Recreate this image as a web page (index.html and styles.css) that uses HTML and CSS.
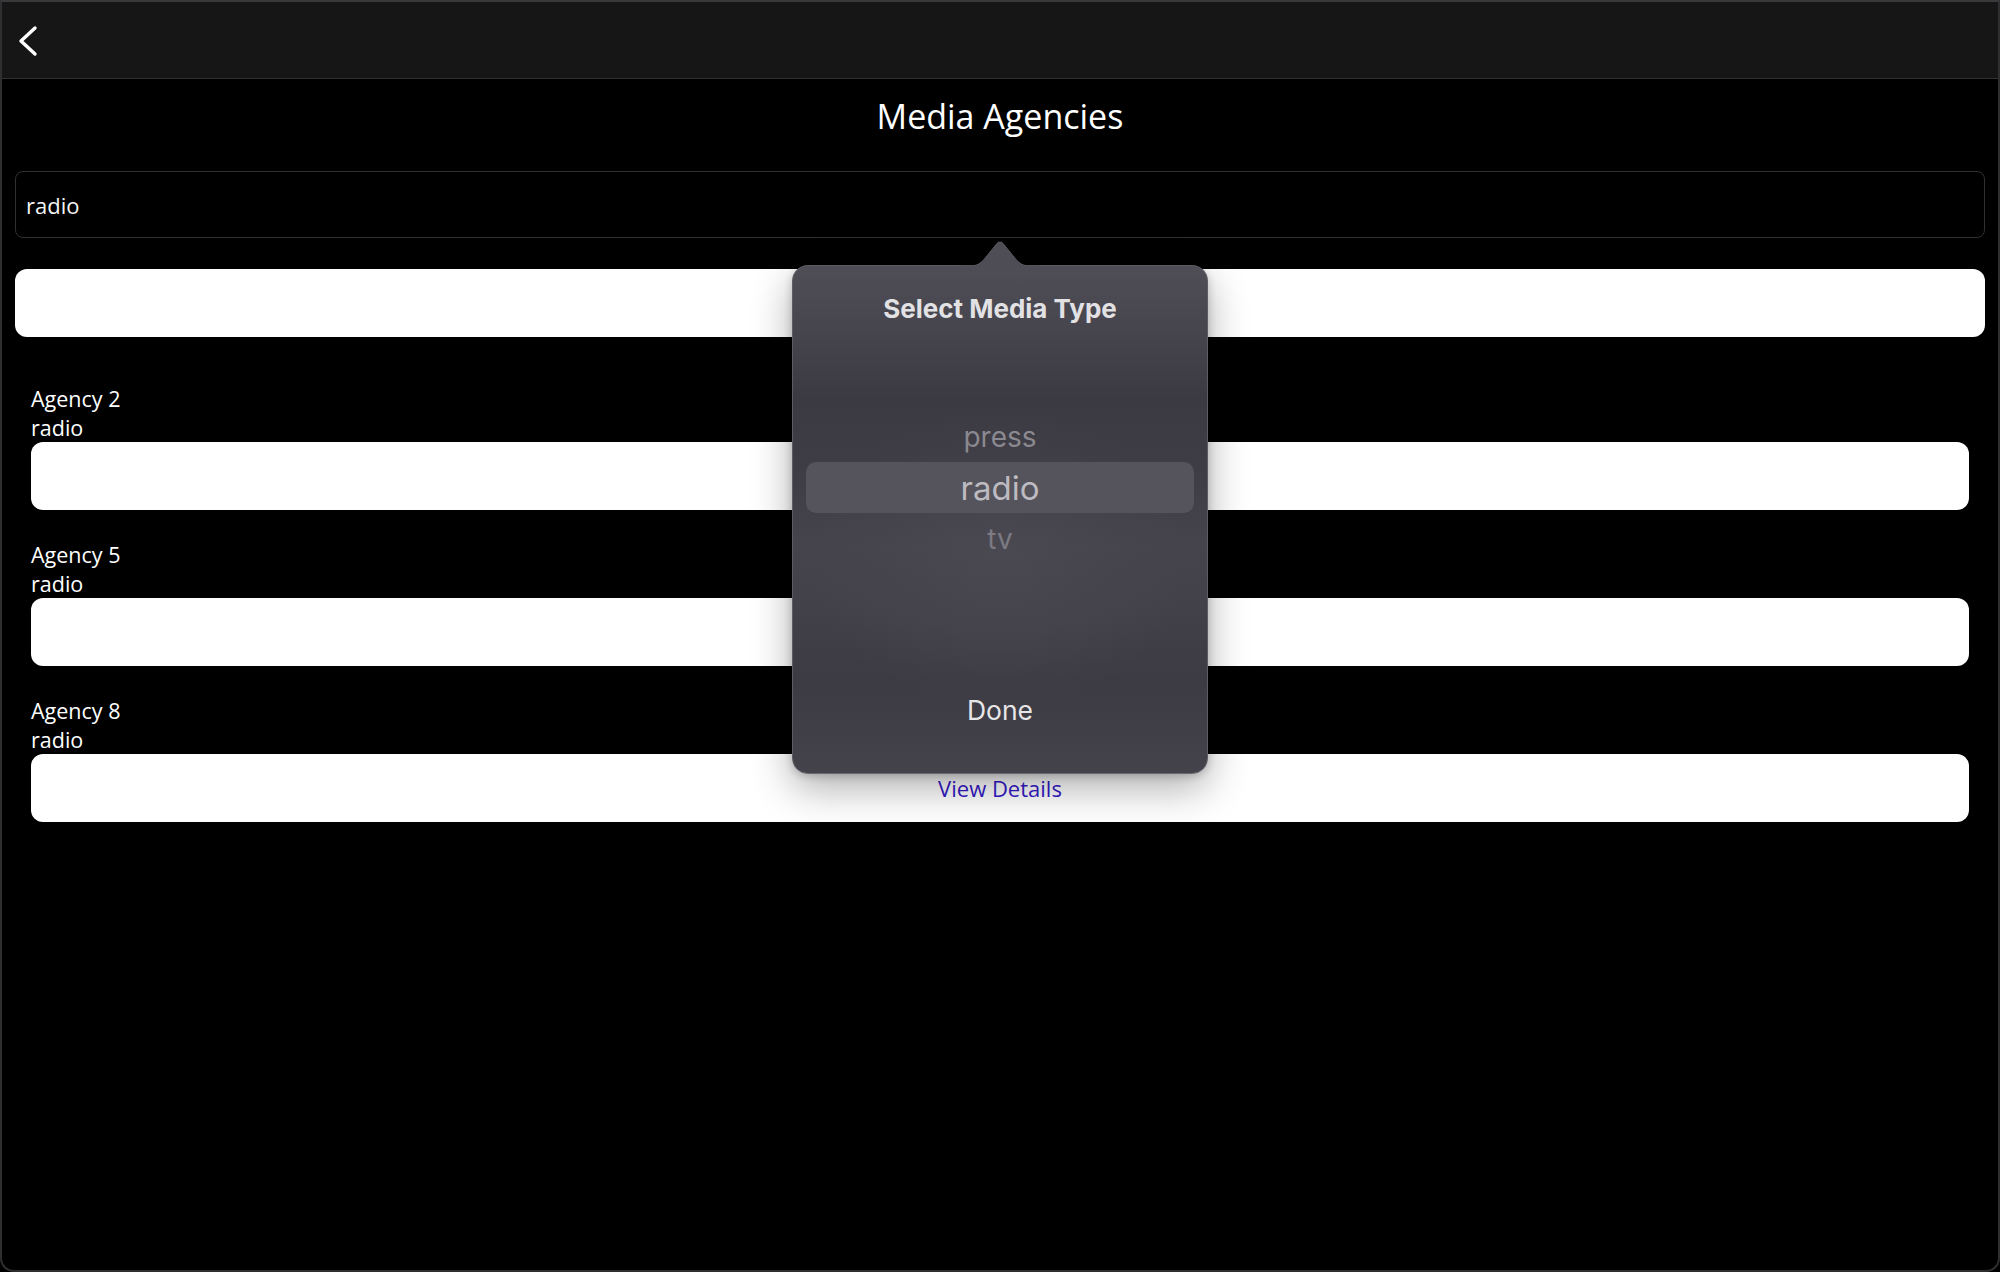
FILE: index.html
```html
<!DOCTYPE html>
<html lang="en">
<head>
<meta charset="utf-8">
<title>Media Agencies</title>
<link rel="stylesheet" href="styles.css">
</head>
<body>
<div class="window">
  <header class="topbar">
    <button class="back" aria-label="Back">
      <svg width="40" height="40" viewBox="0 0 40 40"><polyline points="33,8 19,21 33,34" fill="none" stroke="#ffffff" stroke-width="3.4" stroke-linecap="round" stroke-linejoin="round"/></svg>
    </button>
  </header>
  <main class="content">
    <h1 class="title">Media Agencies</h1>
    <div class="search">radio</div>
    <div class="filter-button"></div>
    <ul class="agencies">
      <li class="agency">
        <div class="agency-name">Agency 2</div>
        <div class="agency-type">radio</div>
        <div class="agency-bar"></div>
      </li>
      <li class="agency">
        <div class="agency-name">Agency 5</div>
        <div class="agency-type">radio</div>
        <div class="agency-bar"></div>
      </li>
      <li class="agency">
        <div class="agency-name">Agency 8</div>
        <div class="agency-type">radio</div>
        <div class="agency-bar"><a class="details">View Details</a></div>
      </li>
    </ul>
  </main>

  <div class="popover">
    <svg class="popover-arrow" width="80" height="28" viewBox="0 0 80 28">
      <path d="M0,27 L10,27 C17,27 20,24.5 24,20.5 L37,4.5 C38.5,2.6 41.5,2.6 43,4.5 L56,20.5 C60,24.5 63,27 70,27 L80,27" fill="#4e4c54" stroke="#5d5c62" stroke-width="1"/>
      <rect x="0" y="26.6" width="80" height="2" fill="#4e4c54"/>
    </svg>
    <div class="popover-title">Select Media Type</div>
    <div class="picker">
      <div class="picker-row dim">press</div>
      <div class="picker-row selected">radio</div>
      <div class="picker-row dimmer">tv</div>
    </div>
    <div class="done">Done</div>
  </div>
</div>
</body>
</html>
```

FILE: styles.css
```css
* { box-sizing: border-box; }

html, body {
  margin: 0;
  padding: 0;
  background: #000;
}

body {
  width: 2000px;
  height: 1272px;
  overflow: hidden;
  font-family: "Open Sans", "Liberation Sans", sans-serif;
  color: #fff;
}

.window {
  position: relative;
  width: 2000px;
  height: 1272px;
  border: 2px solid #2f2f31;
  border-top-color: #3a3a3c;
  border-radius: 0 0 14px 14px;
  background: #000;
  overflow: hidden;
}

.topbar {
  height: 77px;
  background: #161616;
  border-bottom: 1px solid #303030;
  display: flex;
  align-items: center;
  padding-left: 0;
}

.back {
  background: none;
  border: 0;
  padding: 0;
  margin: 0;
  width: 40px;
  height: 40px;
  display: flex;
}

.content {
  padding: 0 13px;
}

.title {
  margin: 13px 0 0;
  font-size: 34px;
  line-height: 48px;
  font-weight: 400;
  text-align: center;
}

.search {
  margin-top: 31px;
  height: 67px;
  border: 1px solid #303030;
  border-radius: 8px;
  padding: 0 10px;
  display: flex;
  align-items: center;
  font-size: 22px;
  color: #f4f4f4;
}

.filter-button {
  margin-top: 31px;
  height: 68px;
  background: #fff;
  border-radius: 12px;
}

.agencies {
  list-style: none;
  margin: 47px 0 0;
  padding: 0 16px;
}

.agency {
  margin-bottom: 30px;
}

.agency-name,
.agency-type {
  font-size: 21.5px;
  line-height: 29px;
}

.agency-bar {
  height: 68px;
  background: #fff;
  border-radius: 12px;
  display: flex;
  align-items: center;
  justify-content: center;
}

.details {
  font-size: 22px;
  color: #3419c9;
  cursor: pointer;
}

.popover {
  position: absolute;
  left: 790px;
  top: 263px;
  width: 416px;
  height: 509px;
  border: 1px solid #5d5c62;
  border-bottom-color: #6a696f;
  border-radius: 16px;
  background:
    radial-gradient(ellipse 45% 30% at 50% 58%, rgba(78,76,86,0.55), rgba(78,76,86,0) 100%),
    linear-gradient(180deg, #4f4d55 0%, #47454d 12%, #3b3941 26%, #3e3c44 40%, #45434b 55%, #424048 68%, #3c3a42 82%, #44424a 100%);
  box-shadow: 0 14px 40px rgba(0,0,0,0.32), 0 2px 8px rgba(0,0,0,0.2);
  display: flex;
  flex-direction: column;
  align-items: center;
  font-family: "Inter", "Open Sans", sans-serif;
}

.popover-arrow {
  position: absolute;
  left: 167px;
  top: -27px;
}

.popover-title {
  margin-top: 27px;
  font-size: 26px;
  line-height: 32px;
  font-weight: 650;
  color: #e2e1e4;
}

.picker {
  margin-top: 86px;
  width: 100%;
  padding: 0 13px;
  display: flex;
  flex-direction: column;
}

.picker-row {
  height: 51px;
  display: flex;
  align-items: center;
  justify-content: center;
  font-size: 28px;
  color: #8a888f;
}

.picker-row.selected {
  background: #55535b;
  border-radius: 10px;
  font-size: 33px;
  color: #bdbbc1;
}

.picker-row.dim {
  color: #8b8990;
}

.picker-row.dimmer {
  color: #7c7a82;
}

.done {
  margin-top: 130px;
  font-size: 26.5px;
  line-height: 32px;
  color: #e6e5e8;
}
```
